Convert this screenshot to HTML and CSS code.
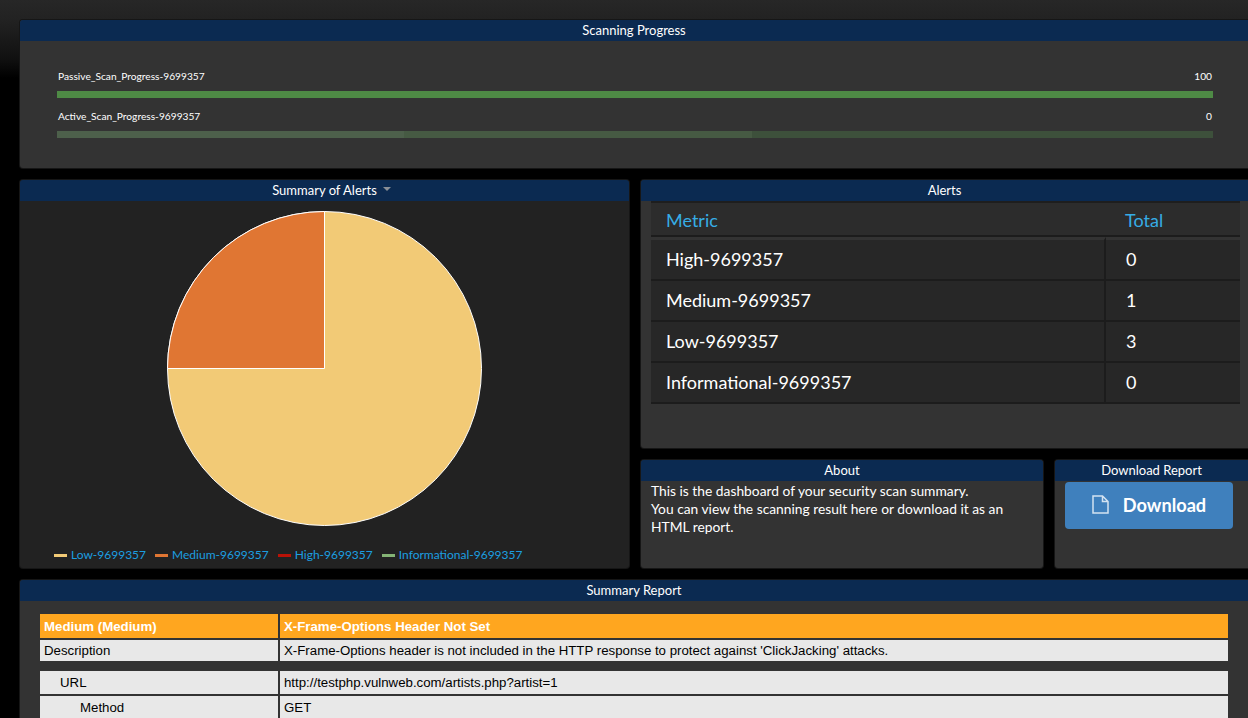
FILE: index.html
```html
<!DOCTYPE html>
<html lang="en">
<head>
<meta charset="utf-8">
<title>Security Scan Dashboard</title>
<link rel="stylesheet" href="styles.css">
</head>
<body>
<main class="page">
  <section class="panel panel-progress">
    <h2 class="panel-title">Scanning Progress</h2>
    <div class="progress-body">
      <div class="progress-item">
        <div class="progress-label"><span>Passive_Scan_Progress-9699357</span><span>100</span></div>
        <div class="bar bar-done"></div>
      </div>
      <div class="progress-item">
        <div class="progress-label"><span>Active_Scan_Progress-9699357</span><span>0</span></div>
        <div class="bar bar-idle"><i class="seg seg-a"></i><i class="seg seg-b"></i><i class="seg seg-c"></i></div>
      </div>
    </div>
  </section>

  <div class="columns">
    <section class="panel panel-chart">
      <h2 class="panel-title"><span class="title-text">Summary of Alerts<span class="caret"></span></span></h2>
      <div class="chart-body">
        <svg class="pie" width="317" height="317" viewBox="0 0 317 317" aria-label="Pie chart">
          <circle cx="158.5" cy="158.5" r="157" fill="#f2ca76" stroke="#fff" stroke-width="1"/>
          <path d="M158.5 158.5 L1.5 158.5 A157 157 0 0 1 158.5 1.5 Z" fill="#e07633" stroke="#fff" stroke-width="1"/>
        </svg>
        <ul class="legend">
          <li><i class="swatch sw-low"></i>Low-9699357</li>
          <li><i class="swatch sw-med"></i>Medium-9699357</li>
          <li><i class="swatch sw-high"></i>High-9699357</li>
          <li><i class="swatch sw-info"></i>Informational-9699357</li>
        </ul>
      </div>
    </section>

    <div class="right-col">
      <section class="panel panel-alerts">
        <h2 class="panel-title">Alerts</h2>
        <table class="metrics">
          <thead>
            <tr><th class="col-metric">Metric</th><th>Total</th></tr>
          </thead>
          <tbody>
            <tr><td class="col-metric">High-9699357</td><td>0</td></tr>
            <tr><td class="col-metric">Medium-9699357</td><td>1</td></tr>
            <tr><td class="col-metric">Low-9699357</td><td>3</td></tr>
            <tr><td class="col-metric">Informational-9699357</td><td>0</td></tr>
          </tbody>
        </table>
      </section>
      <div class="right-bottom">
        <section class="panel panel-about">
          <h2 class="panel-title">About</h2>
          <p class="about-text">This is the dashboard of your security scan summary.<br>You can view the scanning result here or download it as an HTML report.</p>
        </section>
        <section class="panel panel-download">
          <h2 class="panel-title">Download Report</h2>
          <a class="btn-download" href="#">
            <svg class="file-icon" width="17" height="19" viewBox="0 0 17 19" aria-hidden="true">
              <path d="M1 1 H10.5 L16 6.5 V18 H1 Z M10.5 1 V6.5 H16" fill="none" stroke="#d3e2f1" stroke-width="1.5"/>
            </svg>
            <span>Download</span>
          </a>
        </section>
      </div>
    </div>
  </div>

  <section class="panel panel-report">
    <h2 class="panel-title">Summary Report</h2>
    <div class="report-body">
      <table class="report">
        <tr class="risk"><th class="label">Medium (Medium)</th><th>X-Frame-Options Header Not Set</th></tr>
        <tr class="desc"><td class="label">Description</td><td>X-Frame-Options header is not included in the HTTP response to protect against 'ClickJacking' attacks.</td></tr>
        <tr class="spacer"><td colspan="2"></td></tr>
        <tr><td class="label indent-1">URL</td><td>http://testphp.vulnweb.com/artists.php?artist=1</td></tr>
        <tr><td class="label indent-2">Method</td><td>GET</td></tr>
      </table>
    </div>
  </section>
</main>
</body>
</html>
```
FILE: styles.css
```css
* { box-sizing: border-box; }
html, body { margin: 0; height: 100%; overflow: hidden; background: #000; }
body {
  font-family: Lato, "Open Sans", sans-serif;
  color: #fff;
  background: linear-gradient(to bottom, #272727 0, #222 20px, #111 58px, #000 78px) no-repeat #000;
  background-size: 100% 80px;
}
.page { padding: 20px 0 0 20px; display: flex; flex-direction: column; gap: 12px; }
.panel { background: #333; border-radius: 3px 0 0 3px; overflow: hidden; box-shadow: 0 0 0 1px #161616; }
.panel-title {
  margin: 0; height: 21px; background: #0b2a51; font-size: 13px; font-weight: 400;
  line-height: 20px; text-align: center; color: #fff;
}
.title-text { position: relative; }
.panel-progress { height: 148px; }
.progress-body { padding: 28px 35px 0 37px; }
.progress-item { margin-bottom: 11px; }
.progress-label {
  display: flex; justify-content: space-between; font-size: 10.2px; line-height: 14px;
  padding: 0 1px; margin-bottom: 8px;
}
.bar { height: 7px; display: flex; }
.bar-done { background: #4e8a45; }
.seg { display: block; height: 100%; }
.seg-a { width: 347px; background: #4d604b; }
.seg-b { width: 348px; background: #465a43; }
.seg-c { flex: 1; background: #3d503b; }
.columns { display: flex; gap: 12px; height: 388px; }
.panel-chart { width: 609px; background: #222; border-radius: 3px; flex: none; }
.chart-body { display: flex; flex-direction: column; align-items: center; }
.pie { margin-top: 9px; display: block; }
.caret {
  position: absolute; left: calc(100% + 6px); top: 5px; width: 0; height: 0;
  border-left: 4px solid transparent; border-right: 4px solid transparent; border-top: 4px solid #8a8f96;
}
.legend {
  list-style: none; margin: 19px 0 0 34px; padding: 0; display: flex; gap: 9px; align-self: flex-start;
  font-size: 12px; line-height: 18px; color: #1c9fe0;
}
.legend li { display: flex; align-items: center; }
.swatch { width: 13px; height: 3px; margin-right: 4px; display: block; }
.sw-low { background: #f2ca76; }
.sw-med { background: #e07633; }
.sw-high { background: #b91207; }
.sw-info { background: #84b375; }
.right-col { flex: 1; min-width: 0; display: flex; flex-direction: column; gap: 12px; }
.panel-alerts { height: 268px; }
.metrics {
  margin: 0 8px 0 10px; width: 589px; border-collapse: separate; border-spacing: 0; table-layout: fixed; font-size: 18px;
}
.metrics th {
  height: 36px; background: #2c2c2c; color: #36ade6; font-weight: 400; text-align: left;
  padding: 2px 0 0 19px; border-top: 2px solid #1e1e1e; border-bottom: 2px solid #1c1c1c;
}
.metrics th.col-metric, .metrics td.col-metric { width: 455px; padding-left: 15px; }
.metrics td {
  height: 41px; background: #272727; color: #fff; padding: 0 0 2px 20px; border-bottom: 2px solid #1c1c1c;
}
.metrics td.col-metric { border-right: 2px solid #1c1c1c; }
.metrics tbody tr:first-child td { height: 44px; border-top: 3px solid #333; }
.right-bottom { display: flex; gap: 12px; height: 108px; }
.panel-about { width: 402px; flex: none; border-radius: 3px; }
.panel-download { flex: 1; }
.about-text { margin: 0; padding: 1px 30px 0 10px; font-size: 13.8px; line-height: 18px; color: #fff; }
.btn-download {
  display: flex; align-items: center; justify-content: center; gap: 14px; margin: 1px 15px 0 10px; height: 47px;
  padding-bottom: 2px; background: #3f80bd; border-radius: 4px; color: #fff; text-decoration: none;
  font-size: 18.2px; font-weight: 700;
}
.report-body { padding: 13px 20px 0 20px; }
.report {
  width: 1188px; border-collapse: separate; border-spacing: 0; table-layout: fixed;
  font-family: "Liberation Sans", Arial, sans-serif; font-size: 13.25px; color: #000;
}
.report th, .report td { background: #e8e8e8; padding: 0 4px; height: 25px; border-bottom: 2px solid #333; text-align: left; font-weight: 400; }
.report .label { width: 240px; border-right: 2px solid #333; }
.report .risk th { background: #ffa61f; color: #fff; font-weight: 700; height: 26px; }
.report .desc td { height: 21px; border-bottom: 0; }
.report .spacer td { background: #333; height: 10px; padding: 0; border: 0; }
.report .indent-1 { padding-left: 20px; }
.report .indent-2 { padding-left: 40px; }
```
